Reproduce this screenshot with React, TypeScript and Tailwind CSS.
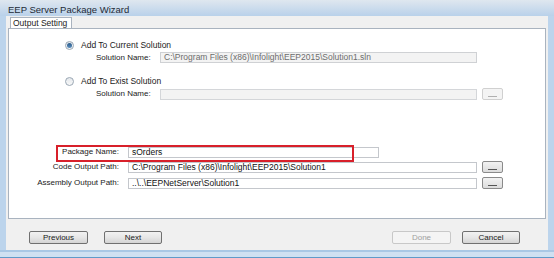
import React from 'react';

const font = { fontFamily: '"Liberation Sans", Arial, sans-serif' };

function Radio({ checked }: { checked?: boolean }) {
  return (
    <span className="flex size-[9px] items-center justify-center rounded-full border border-[#9aa7b4] bg-gradient-to-b from-[#e4e8ec] to-[#f8f8f8]">
      {checked && <span className="size-[5px] rounded-full bg-gradient-to-b from-[#2a5a88] to-[#5a8fbf]" />}
    </span>
  );
}

function Dots({ disabled }: { disabled?: boolean }) {
  return (
    <div
      className={
        'ml-[5px] flex h-[12px] w-[21px] items-end justify-center rounded-[2px] border pb-[2px] ' +
        (disabled
          ? 'border-[#d0d0d0] bg-[#f4f4f4] text-[#b0b0b0]'
          : 'border-[#8a8a8a] bg-gradient-to-b from-[#f2f2f2] to-[#dcdcdc] text-[#555]')
      }
    >
      <span className="h-px w-[9px] bg-current" />
    </div>
  );
}

function WizardButton({ label, disabled, className }: { label: string; disabled?: boolean; className?: string }) {
  return (
    <div
      className={
        'flex h-[13px] items-center justify-center rounded-[2px] border text-[8px] leading-none ' +
        (disabled
          ? 'border-[#c8c8c8] bg-[#f4f4f4] text-[#a0a0a0] '
          : 'border-[#707070] bg-gradient-to-b from-[#f2f2f2] via-[#e6e6e6] to-[#d4d4d4] text-[#1a1a1a] ') +
        (className ?? '')
      }
    >
      {label}
    </div>
  );
}

function PathRow({ label, value, inputW, button, gap }: { label: string; value: string; inputW: string; button?: boolean; gap: string }) {
  return (
    <div className={'flex h-[12px] items-center ' + gap}>
      <div className="w-[119px] shrink-0 whitespace-nowrap pr-[9px] text-right text-[8px] leading-none text-[#222]">{label}</div>
      <div className={'flex h-[11px] shrink-0 items-center whitespace-nowrap border border-[#c4c7cc] bg-white pl-[3px] text-[8.5px] leading-none text-[#111] ' + inputW}>
        {value}
      </div>
      {button && <Dots />}
    </div>
  );
}

export default function App() {
  return (
    <div className="flex h-[258px] w-[554px] flex-col bg-[#bcd4ec]" style={font}>
      <div className="flex h-[16px] items-center bg-gradient-to-b from-[#dfe7ef] to-[#b9d1ea] pl-[8px] pt-[3px] text-[9.5px] leading-none text-[#1e2a36]">
        EEP Server Package Wizard
      </div>

      <div className="ml-[6px] mr-[6px] flex flex-1 flex-col bg-[#f0f0f0] pl-[2px] pr-[2px]">
        {/* tab strip */}
        <div className="flex h-[12px] items-end pl-[2px]">
          <div className="relative -mb-px flex h-[12px] w-[62px] items-center border border-b-0 border-[#a9b3bf] bg-white pl-[2px] text-[8.5px] leading-none text-[#222]">
            Output Setting
          </div>
        </div>

        {/* tab page */}
        <div className="relative h-[191px] border border-[#a9b3bf] bg-white">
          <div className="flex h-[10px] items-center pl-[56px] mt-[11px]">
            <Radio checked />
            <span className="ml-[7px] text-[8.5px] leading-none text-[#222]">Add To Current Solution</span>
          </div>
          <div className="mt-[2px] flex h-[11px] items-center pl-[87px]">
            <span className="w-[64px] text-[8px] leading-none text-[#222]">Solution Name:</span>
            <div className="flex h-[11px] w-[317px] items-center border border-[#cfd1d4] bg-[#f3f3f3] pl-[3px] text-[8.5px] leading-none text-[#6d6d6d]">
              C:\Program Files (x86)\Infolight\EEP2015\Solution1.sln
            </div>
          </div>

          <div className="mt-[13px] flex h-[10px] items-center pl-[56px]">
            <Radio />
            <span className="ml-[7px] text-[8.5px] leading-none text-[#222]">Add To Exist Solution</span>
          </div>
          <div className="mt-[2px] flex h-[12px] items-center pl-[87px]">
            <span className="w-[64px] text-[8px] leading-none text-[#222]">Solution Name:</span>
            <div className="h-[11px] w-[317px] border border-[#d4d6d9] bg-[#f3f3f3]" />
            <Dots disabled />
          </div>

          <PathRow label="Package Name:" value="sOrders" inputW="w-[251px]" gap="mt-[46px]" />
          <PathRow label="Code Output Path:" value="C:\Program Files (x86)\Infolight\EEP2015\Solution1" inputW="w-[349px]" button gap="mt-[3px]" />
          <PathRow label="Assembly Output Path:" value="..\..\EEPNetServer\Solution1" inputW="w-[349px]" button gap="mt-[4px]" />

          {/* highlight */}
          <div className="pointer-events-none absolute left-[47px] top-[116px] h-[17px] w-[298px] border-2 border-[#d8202a]" />
        </div>

        {/* button bar */}
        <div className="flex flex-1 items-center pt-[6px]">
          <WizardButton label="Previous" className="ml-[21px] w-[59px]" />
          <WizardButton label="Next" className="ml-[16px] w-[58px]" />
          <WizardButton label="Done" disabled className="ml-auto w-[59px]" />
          <WizardButton label="Cancel" className="ml-[11px] mr-[26px] w-[58px]" />
        </div>
      </div>

      <div className="h-[8px] border-t-2 border-[#a9c7e4] bg-[#cfe0f1] border-b border-b-[#5f9ac8]" />
    </div>
  );
}
